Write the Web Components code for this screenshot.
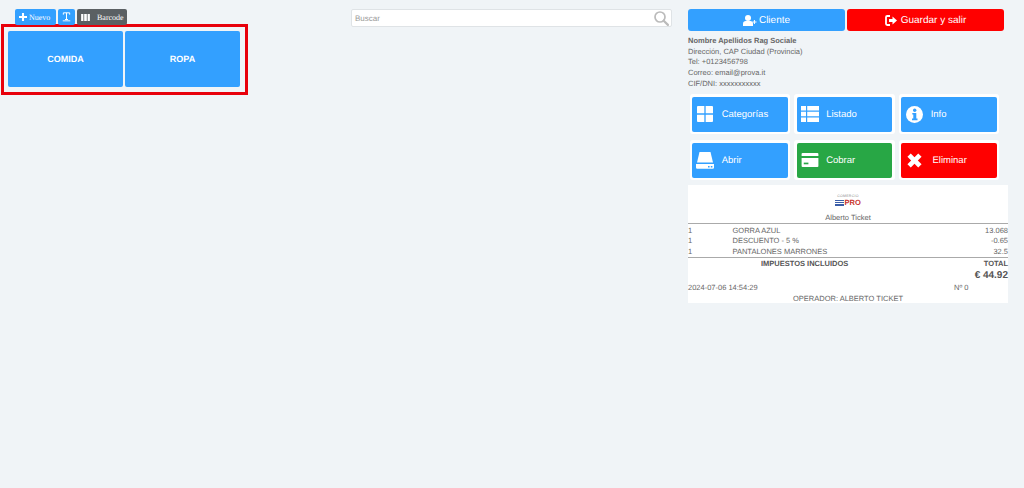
<!DOCTYPE html>
<html lang="es"><head><meta charset="utf-8"><title>TPV</title>
<style>
html,body{margin:0;padding:0;background:#f0f4f7;height:488px;overflow:hidden;font-family:"Liberation Sans",Arial,sans-serif;text-rendering:geometricPrecision}
</style></head><body>
<pos-app></pos-app>
<script>
const ICONS={
plus:'<svg viewBox="0 0 10 10" width="8" height="8"><path d="M3.7 0h2.6v3.7H10v2.6H6.3V10H3.7V6.3H0V3.7h3.7z" fill="#fff"/></svg>',
text:'<svg viewBox="0 0 10 12" width="9" height="10"><path d="M1.2 3.2V1h7.6v2.2M5 1v8M3.2 9h3.6" fill="none" stroke="#fff" stroke-width="1.2"/><path d="M0.5 10.6h9" stroke="#fff" stroke-width="1.1"/></svg>',
barcode:'<svg viewBox="0 0 10 8" width="9" height="7"><path d="M0 0h2.6v8H0zM3.5 0h3v8h-3zM7.4 0H10v8H7.4z" fill="#fff"/></svg>',
user:'<svg viewBox="0 0 14 11" width="14" height="11"><circle cx="5" cy="3" r="3" fill="#fff"/><path d="M0 11V8.4C0 7 1.2 6 2.6 6h4.8C8.8 6 10 7 10 8.4V11z" fill="#fff"/><path d="M10.9 5h1v1.4h1.6v1.1h-1.6V9h-1V7.5H9.4V6.4h1.5z" fill="#fff"/></svg>',
exit:'<svg viewBox="0 0 12 11" width="12" height="11"><path d="M5 1H2.2C1.5 1 1 1.5 1 2.2v6.6C1 9.5 1.5 10 2.2 10H5" fill="none" stroke="#fff" stroke-width="1.8"/><path d="M4 4h3.5V1.6L12 5.5 7.5 9.4V7H4z" fill="#fff"/></svg>',
grid:'<svg viewBox="0 0 17 17" width="16" height="16"><path d="M0 1a1 1 0 0 1 1-1h6.8v7.8H0zM9.2 0H16a1 1 0 0 1 1 1v6.8H9.2zM0 9.2h7.8V17H1a1 1 0 0 1-1-1zM9.2 9.2H17V16a1 1 0 0 1-1 1H9.2z" fill="#fff"/></svg>',
list:'<svg viewBox="0 0 18 16" width="18" height="16"><path d="M0 0h5v4.4H0zM6.2 0H18v4.4H6.2zM0 5.8h5v4.4H0zM6.2 5.8H18v4.4H6.2zM0 11.6h5V16H0zM6.2 11.6H18V16H6.2z" fill="#fff"/></svg>',
info:'<svg viewBox="0 0 17 17" width="17" height="17"><circle cx="8.5" cy="8.5" r="8.5" fill="#fff"/><circle cx="8.7" cy="4.3" r="1.7" fill="#33a0ff"/><path d="M6.3 7h4v5.6h1.2v1.6H6v-1.6h1.3V8.6h-1z" fill="#33a0ff"/></svg>',
drive:'<svg viewBox="0 0 18 17" width="18" height="17"><path d="M3.5 0h11L17 10.5H1z" fill="#fff"/><path d="M0 12h18v3.6a1.2 1.2 0 0 1-1.2 1.2H1.2A1.2 1.2 0 0 1 0 15.6z" fill="#fff"/><path d="M12 14h1.6v1.4H12zM14.8 14h1.6v1.4h-1.6z" fill="#33a0ff"/></svg>',
card:'<svg viewBox="0 0 18 15" width="18" height="14"><path d="M0 1a1 1 0 0 1 1-1h16a1 1 0 0 1 1 1v2.3H0zM0 5.4h18V14a1 1 0 0 1-1 1H1a1 1 0 0 1-1-1z" fill="#fff"/><path d="M2.3 10.3h5v1.8h-5z" fill="#28a745"/></svg>',
cross:'<svg viewBox="0 0 14 14" width="15" height="15"><path d="M3.5.4 7 3.9 10.5.4l3.1 3.1L10.1 7l3.5 3.5-3.1 3.1L7 10.1l-3.5 3.5-3.1-3.1L3.9 7 .4 3.5z" fill="#fff"/></svg>',
search:'<svg viewBox="0 0 15 15" width="15" height="15"><circle cx="6" cy="6" r="5" fill="none" stroke="#bbb" stroke-width="1.7"/><path d="m9.7 9.7 4.2 4.2" stroke="#bbb" stroke-width="2.2" stroke-linecap="round"/></svg>'
};
function def(name,html,setup){
  const t=document.createElement('template');t.innerHTML=html;
  customElements.define(name,class extends HTMLElement{
    connectedCallback(){
      if(this.shadowRoot)return;
      const r=this.attachShadow({mode:'open'});r.appendChild(t.content.cloneNode(true));
      if(setup)setup(this,r);
    }
  });
}
def('tool-btn',`<style>
:host{display:flex;align-items:center;height:16px;width:var(--w,41px);border-radius:2px;background:var(--bg,#33a0ff);color:#fff;font:8px "Liberation Serif",serif;padding:0 0 0 var(--px,4px);gap:var(--g,2px);box-sizing:border-box}
span{display:flex}
</style><span id="i"></span><slot></slot>`,(h,r)=>{r.getElementById('i').innerHTML=ICONS[h.getAttribute('icon')]});
def('cat-btn',`<style>
:host{display:flex;align-items:center;justify-content:center;width:115px;height:56px;background:#33a0ff;border-radius:2px;color:#fff;font:bold 9px "Liberation Sans",sans-serif}
</style><slot></slot>`);
def('left-pane',`<style>
:host{display:block;width:351px;padding:9px 0 0 1px;box-sizing:border-box}
.bar{display:flex;gap:2px;margin-left:14px;height:15px}
.box{width:247px;height:71px;box-sizing:border-box;border:3px solid #e8000b;padding:4px;display:flex;gap:2px}
</style><div class="bar"><slot name="bar"></slot></div><div class="box"><slot></slot></div>`);
def('search-box',`<style>
:host{display:flex;align-items:center;justify-content:space-between;width:321px;height:18px;margin-top:9px;box-sizing:border-box;background:#fff;border:1px solid #dfe3e6;border-radius:2px;padding:0 2px 0 3px;color:#9a9a9a;font:8px "Liberation Sans",sans-serif}
span{display:flex}
</style><slot></slot><span id="i"></span>`,(h,r)=>{r.getElementById('i').innerHTML=ICONS.search});
def('top-btn',`<style>
:host{display:flex;align-items:center;justify-content:center;gap:var(--g,2px);width:157px;height:22px;border-radius:3px;background:var(--bg,#33a0ff);color:#fff;font:10px "Liberation Sans",sans-serif}
span{display:flex}
</style><span id="i"></span><slot></slot>`,(h,r)=>{r.getElementById('i').innerHTML=ICONS[h.getAttribute('icon')]});
def('client-info',`<style>
:host{display:block;margin-top:5px;font:7.5px/10.7px "Liberation Sans",sans-serif;color:#666;white-space:nowrap}
b{color:#555}
</style><slot></slot>`);
def('action-btn',`<style>
:host{display:block;box-sizing:border-box;width:100.5px;height:40px;padding:2.5px;background:#fff;border-radius:3px}
div{display:flex;align-items:center;height:100%;box-sizing:border-box;padding:0 0 0 4px;gap:var(--g,7.7px);background:var(--bg,#33a0ff);color:#fff;border-radius:2px;font:9.5px "Liberation Sans",sans-serif}
span{display:flex;width:18px;justify-content:center}
</style><div><span id="i"></span><slot></slot></div>`,(h,r)=>{r.getElementById('i').innerHTML=ICONS[h.getAttribute('icon')]});
def('action-grid',`<style>
:host{display:grid;grid-template-columns:100.5px 100.5px 100.5px;grid-auto-rows:40px;gap:6px 4px;margin:4.5px 0 0 1.5px}
</style><slot></slot>`);
def('brand-logo',`<style>
:host{display:flex;justify-content:center;height:12px;color:#c8322b;font:bold 7.5px/7px "Liberation Sans",sans-serif}
.l{display:flex;flex-direction:column;gap:1px;padding-bottom:.5px}
.l i{display:block;width:9px;height:1.3px;background:#3b5ea8}
.w{display:flex;flex-direction:column;align-items:center}
small{font:3.5px/5px "Liberation Sans",sans-serif;color:#888;letter-spacing:.3px}
.f{display:flex;gap:.5px;align-items:flex-end}
</style><div class="w"><small>COMERCIO</small><div class="f"><div class="l"><i></i><i></i><i></i></div><slot></slot></div></div>`);
def('ticket-view',`<style>
:host{display:block;width:320px;height:118px;margin-top:5px;background:#fff;padding-top:9px;box-sizing:border-box;font:7.5px/10.6px "Liberation Sans",sans-serif;color:#666}
.c{text-align:center}
.name{margin-top:7px;line-height:10px}
.hr{border-top:1px solid #aaa}
.t{display:grid;grid-template-columns:44.5px 1fr auto;padding-top:2px;line-height:10.4px}
.t span:nth-child(3n){text-align:right}
.s{border-top:1px solid #aaa;padding-top:1px;display:grid;grid-template-columns:1fr auto;font-weight:bold;color:#555}
.s span:first-child{padding-left:73px}
.tot{text-align:right;font:bold 10px/12px "Liberation Sans",sans-serif;color:#555;margin-top:.5px}
.d{display:flex;margin-top:1px}
.d span:first-child{width:266px}
.op{margin-top:.5px}
</style><brand-logo>PRO</brand-logo>
<div class="c name">Alberto Ticket</div><div class="hr"></div>
<div class="t"><span>1</span><span>GORRA AZUL</span><span>13.068</span><span>1</span><span>DESCUENTO - 5 %</span><span>-0.65</span><span>1</span><span>PANTALONES MARRONES</span><span>32.5</span></div>
<div class="s"><span>IMPUESTOS INCLUIDOS</span><span>TOTAL</span></div>
<div class="tot">€ 44.92</div>
<div class="d"><span>2024-07-06 14:54:29</span><span>Nº 0</span></div>
<div class="c op">OPERADOR: ALBERTO TICKET</div>`);
def('right-pane',`<style>
:host{display:block;width:320px;margin-left:16px;padding-top:9px}
.top{display:flex;gap:2px}
</style><div class="top"><slot name="top"></slot></div><slot></slot>`);
def('pos-app',`<style>
:host{display:flex;align-items:flex-start;width:1024px}
</style>
<left-pane>
<tool-btn slot="bar" icon="plus">Nuevo</tool-btn>
<tool-btn slot="bar" icon="text" style="--w:17px"></tool-btn>
<tool-btn slot="bar" icon="barcode" style="--bg:#5b6063;--g:7px;--w:50px">Barcode</tool-btn>
<cat-btn>COMIDA</cat-btn><cat-btn>ROPA</cat-btn>
</left-pane>
<search-box>Buscar</search-box>
<right-pane>
<top-btn slot="top" icon="user">Cliente</top-btn>
<top-btn slot="top" icon="exit" style="--bg:#ff0000;--g:4px">Guardar y salir</top-btn>
<client-info><b>Nombre Apellidos Rag Sociale</b><br>Dirección, CAP Ciudad (Provincia)<br>Tel: +0123456798<br>Correo: email@prova.it<br>CIF/DNI: xxxxxxxxxxx</client-info>
<action-grid>
<action-btn icon="grid">Categorías</action-btn>
<action-btn icon="list">Listado</action-btn>
<action-btn icon="info">Info</action-btn>
<action-btn icon="drive">Abrir</action-btn>
<action-btn icon="card" style="--bg:#28a745">Cobrar</action-btn>
<action-btn icon="cross" style="--bg:#ff0000;--g:9.5px">Eliminar</action-btn>
</action-grid>
<ticket-view></ticket-view>
</right-pane>`);
</script></body></html>
